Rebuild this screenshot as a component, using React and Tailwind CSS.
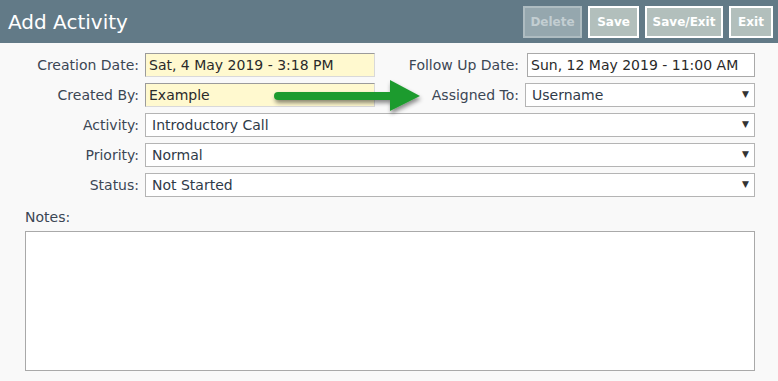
const font = { fontFamily: '"DejaVu Sans", Verdana, sans-serif' };

function Label({ children, className = '' }) {
  return (
    <div className={`shrink-0 text-right text-[14px] text-[#3b4654] ${className}`}>{children}</div>
  );
}

function DateInput({ value, yellow, className = '' }) {
  return (
    <div
      className={`flex h-[24px] items-center border px-[3px] text-[14px] text-[#2a2a2a] ${
        yellow
          ? 'border-[#d9d9d9] border-t-[#9b9b9b] border-l-[#9b9b9b] bg-[#fff9cf]'
          : 'border-[#a9a9a9] bg-white text-[#1a1a3a]'
      } ${className}`}
    >
      {value}
    </div>
  );
}

function Select({ value, className = '' }) {
  return (
    <div
      className={`flex h-[24px] items-center justify-between border border-[#b4b4b4] bg-white pl-[6px] pr-[5px] text-[14px] text-[#2f3a48] ${className}`}
    >
      <span>{value}</span>
      <span className="text-[9px] text-[#333]">▼</span>
    </div>
  );
}

function HeaderButton({ children, disabled, className = '' }) {
  return (
    <button
      type="button"
      className={`flex h-[32px] items-center justify-center border-2 text-[12px] font-bold ${
        disabled
          ? 'border-[#aebcc1] bg-[#95a7ae] text-[#c3ced2]'
          : 'border-white bg-[#b2bfbc] text-white'
      } ${className}`}
    >
      {children}
    </button>
  );
}

export default function App() {
  return (
    <div className="relative h-[381px] w-[778px] overflow-hidden bg-[#f9f9f9]" style={font}>
      <div className="flex h-[43px] items-center justify-between bg-[#627a87] pl-[8px] pr-[5px]">
        <h1 className="text-[20px] text-white">Add Activity</h1>
        <div className="flex gap-[6px]">
          <HeaderButton disabled className="w-[59px]">Delete</HeaderButton>
          <HeaderButton className="w-[51px]">Save</HeaderButton>
          <HeaderButton className="w-[78px]">Save/Exit</HeaderButton>
          <HeaderButton className="w-[44px]">Exit</HeaderButton>
        </div>
      </div>

      <div className="flex flex-col gap-[6px] pt-[10px] pr-[23px]">
        <div className="flex items-center">
          <Label className="w-[145px] pr-[6px]">Creation Date:</Label>
          <DateInput yellow value="Sat, 4 May 2019 - 3:18 PM" className="w-[230px]" />
          <Label className="flex-1 pr-[8px]">Follow Up Date:</Label>
          <DateInput value="Sun, 12 May 2019 - 11:00 AM" className="w-[228px]" />
        </div>
        <div className="flex items-center">
          <Label className="w-[145px] pr-[6px]">Created By:</Label>
          <DateInput yellow value="Example" className="w-[230px]" />
          <Label className="flex-1 pr-[6px]">Assigned To:</Label>
          <Select value="Username" className="w-[230px]" />
        </div>
        <div className="flex items-center">
          <Label className="w-[145px] pr-[6px]">Activity:</Label>
          <Select value="Introductory Call" className="flex-1" />
        </div>
        <div className="flex items-center">
          <Label className="w-[145px] pr-[6px]">Priority:</Label>
          <Select value="Normal" className="flex-1" />
        </div>
        <div className="flex items-center">
          <Label className="w-[145px] pr-[6px]">Status:</Label>
          <Select value="Not Started" className="flex-1" />
        </div>
      </div>

      <div className="pl-[25px] pr-[23px] pt-[10px]">
        <div className="text-[14px] text-[#3b4654]">Notes:</div>
        <div className="mt-[3px] h-[140px] border border-[#a9a9a9] bg-white" />
      </div>

      <svg className="absolute left-[268px] top-[76px]" width="160" height="42" viewBox="0 0 160 42">
        <defs>
          <filter id="sh" x="-10%" y="-30%" width="120%" height="160%">
            <feDropShadow dx="1" dy="3" stdDeviation="2" floodColor="#000" floodOpacity="0.45" />
          </filter>
        </defs>
        <g filter="url(#sh)">
          <line x1="10" y1="20" x2="125" y2="20" stroke="#1f9b2f" strokeWidth="8" strokeLinecap="round" />
          <polygon points="122,4 152,20 122,35" fill="#1f9b2f" />
        </g>
      </svg>
    </div>
  );
}
